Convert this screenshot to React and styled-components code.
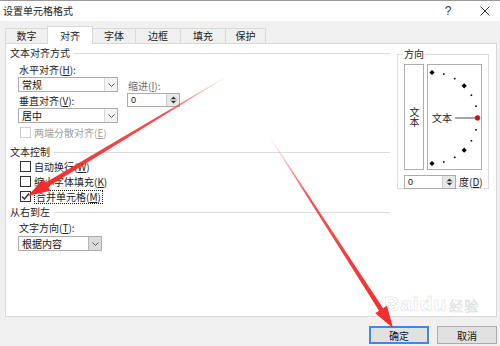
import React from 'react';
import styled, { createGlobalStyle } from 'styled-components';

const Global = createGlobalStyle`
  html, body { margin: 0; padding: 0; }
  body {
    width: 500px; height: 346px; overflow: hidden;
    background: #f0f0f0;
    font-family: "Noto Sans CJK SC", "Microsoft YaHei", "Noto Sans", sans-serif;
    font-size: 10px; color: #1a1a1a;
  }
`;

const Window = styled.div`
  position: relative;
  width: 500px; height: 346px;
  display: flex; flex-direction: column;
  background: #f0f0f0;
  overflow: hidden;
`;

const TitleBar = styled.div`
  box-sizing: border-box;
  height: 21px;
  background: #fff;
  border-top: 1px solid #9a9a9a;
  display: flex; align-items: center;
  padding-left: 3px;
`;
const Title = styled.span`
  flex: 1;
  font-size: 10px; line-height: 14px; color: #222;
`;
const TitleBtn = styled.span`
  width: ${p => p.$w}px;
  margin-right: ${p => p.$mr || 0}px;
  display: flex; align-items: center; justify-content: center;
  font-family: "Liberation Sans", sans-serif;
  font-size: 12px; color: #333;
`;

const TabStrip = styled.div`
  display: flex; align-items: flex-end;
  height: 17px;
  margin-top: 5px;
  padding-left: 5px;
`;
const Tab = styled.div`
  box-sizing: border-box;
  width: ${p => p.$w}px;
  height: ${p => (p.$active ? 18 : 15)}px;
  margin-left: -1px;
  margin-bottom: ${p => (p.$active ? -1 : 0)}px;
  display: flex; align-items: center; justify-content: center;
  border: 1px solid #d9d9d9; border-bottom: none;
  background: ${p => (p.$active ? '#fff' : '#f0f0f0')};
  position: relative; z-index: ${p => (p.$active ? 2 : 0)};
  font-size: 10px; line-height: 12px; color: #222;
  &:first-child { margin-left: 0; }
`;

const Panel = styled.div`
  box-sizing: border-box;
  position: relative; z-index: 1;
  margin-left: 5px;
  width: 492px; height: 274px;
  border: 1px solid #d9d9d9;
  background: #fff;
  display: flex; align-items: flex-start;
  padding: 2px 0 0 4px;
`;

const LeftCol = styled.div`
  width: 380px;
  display: flex; flex-direction: column;
`;

const SectionHeader = styled.div`
  display: flex; align-items: center; gap: 4px;
  height: 14px;
  margin-top: ${p => p.$mt || 0}px;
  font-size: 10px; line-height: 14px; color: #222;
  &::after { content: ''; flex: 1; height: 1px; background: #dcdcdc; }
`;

const Indent = styled.div`
  padding-left: ${p => p.$pl ?? 8}px;
  display: flex;
  flex-direction: ${p => p.$row ? 'row' : 'column'};
  align-items: flex-start;
`;

const Column = styled.div`
  display: flex; flex-direction: column;
  margin-left: ${p => p.$ml || 0}px;
  margin-top: ${p => p.$mt || 0}px;
`;

const Label = styled.div`
  height: 14px; line-height: 14px;
  margin-top: ${p => p.$mt || 0}px;
  padding-left: 1px;
  font-size: 10px; color: ${p => p.$dim ? '#6e6e6e' : '#222'};
  white-space: nowrap;
`;

const SelectBox = styled.div`
  box-sizing: border-box;
  width: ${p => p.$w}px; height: 15px;
  margin-top: ${p => p.$mt || 0}px;
  border: 1px solid #acacac;
  background: #fff;
  display: flex; align-items: stretch;
`;
const SelectText = styled.span`
  flex: 1; padding-left: 3px;
  font-size: 10px; line-height: 13px; color: #111;
`;
const DropBtn = styled.span`
  width: 12px;
  border-left: 1px solid ${p => p.$active ? '#b5b5b5' : '#dadada'};
  background: ${p => p.$active ? '#dcdcdc' : '#f4f4f4'};
  display: flex; align-items: center; justify-content: center;
`;

const SpinBox = styled.div`
  box-sizing: border-box;
  flex: none;
  width: ${p => p.$w}px; height: 14px;
  border: 1px solid #acacac;
  background: #fff;
  display: flex; align-items: stretch;
`;
const SpinText = styled.span`
  flex: 1; padding-left: 3px;
  font-family: "Liberation Sans", sans-serif;
  font-size: 9px; line-height: 12px; color: #111;
`;
const SpinBtns = styled.span`
  width: 12px;
  background: #e8e8e8;
  border-left: 1px solid #d0d0d0;
  display: flex; align-items: center; justify-content: center;
`;

const CheckRow = styled.div`
  display: flex; align-items: center; gap: 3px;
  height: 15px;
  margin-top: ${p => p.$mt || 0}px;
  padding-left: 1px;
  font-size: 10px; color: ${p => p.$disabled ? '#a0a0a0' : '#222'};
  white-space: nowrap;
`;
const Box = styled.span`
  box-sizing: border-box;
  width: 11px; height: 11px;
  border: 1px solid ${p => p.$disabled ? '#cfcfcf' : '#333'};
  background: #fff;
  display: flex; align-items: center; justify-content: center;
`;
const FocusText = styled.span`
  border: 1px dotted #222;
  padding: 0 1px;
  line-height: 12px;
`;

const Group = styled.fieldset`
  box-sizing: border-box;
  margin: 1px 0 0 7px;
  width: 92px; height: 142px;
  padding: 3px 0 2px 6px;
  border: 1px solid #dcdcdc;
  display: flex; flex-direction: column;
  min-inline-size: 0;
`;
const Legend = styled.legend`
  padding: 0 1px;
  margin-left: -1px;
  font-size: 10px; line-height: 14px; color: #222;
`;
const OrientRow = styled.div`
  display: flex; gap: 3px;
`;
const VerticalBox = styled.div`
  box-sizing: border-box;
  width: 20px; height: 106px;
  border: 1px solid #adadad;
  display: flex; align-items: center; justify-content: center;
  writing-mode: vertical-lr; text-orientation: upright;
  font-size: 10px; line-height: 12px; color: #222;
`;
const ArcBox = styled.div`
  box-sizing: border-box;
  width: 55px; height: 106px;
  border: 1px solid #adadad;
  display: flex;
`;
const DegreeRow = styled.div`
  display: flex; align-items: center; gap: 3px;
  margin-top: 4px;
  font-size: 10px; color: #222;
  white-space: nowrap;
`;

const Footer = styled.div`
  display: flex; justify-content: flex-end; gap: 8px;
  margin-top: 9px;
  padding-right: 3px;
`;
const Button = styled.div`
  box-sizing: border-box;
  width: 60px; height: 18px;
  display: flex; align-items: center; justify-content: center;
  background: #e1e1e1;
  border: ${p => p.$primary ? '2px solid #3c8be0' : '1px solid #adadad'};
  font-size: 10px; color: #111;
`;

const Overlay = styled.svg`
  position: absolute; left: 0; top: 0;
  width: 500px; height: 346px;
  pointer-events: none; z-index: 10;
`;

const Watermark = styled.div`
  position: absolute; left: 384px; top: 292px;
  z-index: 9; pointer-events: none;
  color: rgba(255, 255, 255, 0.55);
  -webkit-text-stroke: 0.6px rgba(150, 150, 150, 0.35);
  font-family: "Liberation Sans", sans-serif;
  font-size: 21px; font-weight: bold; line-height: 24px; letter-spacing: 1px;
`;
const WmCn = styled.span`
  font-family: "Noto Sans CJK SC", sans-serif; font-size: 14px; font-weight: normal; margin-left: 2px;
`;

const Chevron = () => (
  <svg width="7" height="4" viewBox="0 0 7 4"><path d="M0.5 0.5 L3.5 3.5 L6.5 0.5" fill="none" stroke="#555" strokeWidth="1" /></svg>
);
const SpinArrows = () => (
  <svg width="7" height="10" viewBox="0 0 7 10">
    <path d="M1 4 L3.5 1.5 L6 4 Z" fill="#333" />
    <line x1="0" y1="5" x2="7" y2="5" stroke="#9a9a9a" strokeWidth="1" />
    <path d="M1 6 L3.5 8.5 L6 6 Z" fill="#333" />
  </svg>
);
const Check = () => (
  <svg width="9" height="9" viewBox="0 0 9 9"><path d="M1 4.5 L3.5 7 L8 1.5" fill="none" stroke="#222" strokeWidth="1.2" /></svg>
);
const CloseX = () => (
  <svg width="10" height="10" viewBox="0 0 10 10"><path d="M0.5 0.5 L9.5 9.5 M9.5 0.5 L0.5 9.5" stroke="#333" strokeWidth="1" /></svg>
);

const Select = ({ w, value, active, mt }) => (
  <SelectBox $w={w} $mt={mt}>
    <SelectText>{value}</SelectText>
    <DropBtn $active={active}><Chevron /></DropBtn>
  </SelectBox>
);
const Spin = ({ w, value }) => (
  <SpinBox $w={w}>
    <SpinText>{value}</SpinText>
    <SpinBtns><SpinArrows /></SpinBtns>
  </SpinBox>
);

const Orientation = () => {
  const cx = 4, cy = 53, r = 45.5;
  const dots = [];
  for (let a = 90; a >= -90; a -= 15) {
    if (a === 0) continue;
    const rad = (a * Math.PI) / 180;
    const x = cx + r * Math.cos(rad), y = cy - r * Math.sin(rad);
    if (a % 45 === 0) {
      dots.push(<path key={a} d={`M${x} ${y - 2.6} L${x + 2.6} ${y} L${x} ${y + 2.6} L${x - 2.6} ${y} Z`} fill="#000" />);
    } else {
      dots.push(<rect key={a} x={x - 0.8} y={y - 0.8} width="1.6" height="1.6" fill="#000" />);
    }
  }
  return (
    <svg width="53" height="104" viewBox="0 0 53 104">
      {dots}
      <text x="4" y="57" fontSize="10" fill="#222" fontFamily="Noto Sans CJK SC, sans-serif">文本</text>
      <line x1="27" y1="53" x2="47" y2="53" stroke="#777" strokeWidth="1.3" />
      <circle cx="49.5" cy="53" r="2.4" fill="#e00" stroke="#700" strokeWidth="0.5" />
    </svg>
  );
};

const Arrow = ({ tail, tip, id, headLen = 22, headW = 7, shaft = 2.4 }) => {
  const dx = tip[0] - tail[0], dy = tip[1] - tail[1];
  const len = Math.hypot(dx, dy);
  const ux = dx / len, uy = dy / len;
  const nx = -uy, ny = ux;
  const bx = tip[0] - ux * headLen, by = tip[1] - uy * headLen;
  const pts = [
    [tail[0] + nx * 0.3, tail[1] + ny * 0.3],
    [bx + nx * shaft, by + ny * shaft],
    [bx + nx * headW, by + ny * headW],
    tip,
    [bx - nx * headW, by - ny * headW],
    [bx - nx * shaft, by - ny * shaft],
    [tail[0] - nx * 0.3, tail[1] - ny * 0.3],
  ];
  return (
    <>
      <defs>
        <linearGradient id={id} gradientUnits="userSpaceOnUse" x1={tail[0]} y1={tail[1]} x2={tip[0]} y2={tip[1]}>
          <stop offset="0" stopColor="#ff3b3b" stopOpacity="0.1" />
          <stop offset="0.3" stopColor="#f43232" stopOpacity="0.85" />
          <stop offset="1" stopColor="#f22a2a" stopOpacity="1" />
        </linearGradient>
      </defs>
      <polygon points={pts.map(p => p.join(',')).join(' ')} fill={`url(#${id})`} />
    </>
  );
};

const tabs = [
  { label: '数字', w: 43 },
  { label: '对齐', w: 46, active: true },
  { label: '字体', w: 44 },
  { label: '边框', w: 46 },
  { label: '填充', w: 46 },
  { label: '保护', w: 41 },
];

export default function App() {
  return (
    <>
      <Global />
      <Window>
        <TitleBar>
          <Title>设置单元格格式</Title>
          <TitleBtn $w={36} $mr={4}>?</TitleBtn>
          <TitleBtn $w={30}><CloseX /></TitleBtn>
        </TitleBar>

        <TabStrip>
          {tabs.map(t => (
            <Tab key={t.label} $w={t.w} $active={t.active}>{t.label}</Tab>
          ))}
        </TabStrip>

        <Panel>
          <LeftCol>
            <SectionHeader>文本对齐方式</SectionHeader>
            <Indent $row>
              <Column>
                <Label $mt={3}>水平对齐(<u>H</u>):</Label>
                <Select w={100} value="常规" />
                <Label $mt={2}>垂直对齐(<u>V</u>):</Label>
                <Select w={100} value="居中" />
              </Column>
              <Column $ml={9} $mt={19}>
                <Label $dim>缩进(<u>I</u>):</Label>
                <Spin w={53} value="0" />
              </Column>
            </Indent>
            <Indent $pl={9}>
              <CheckRow $mt={2} $disabled>
                <Box $disabled />
                <span>两端分散对齐(<u>E</u>)</span>
              </CheckRow>
            </Indent>

            <SectionHeader $mt={5}>文本控制</SectionHeader>
            <Indent $pl={9}>
              <CheckRow><Box /><span>自动换行(<u>W</u>)</span></CheckRow>
              <CheckRow><Box /><span>缩小字体填充(<u>K</u>)</span></CheckRow>
              <CheckRow><Box><Check /></Box><FocusText>合并单元格(<u>M</u>)</FocusText></CheckRow>
            </Indent>

            <SectionHeader $mt={1}>从右到左</SectionHeader>
            <Indent>
              <Label $mt={2}>文字方向(<u>T</u>):</Label>
              <Select w={84} value="根据内容" active mt={1} />
            </Indent>
          </LeftCol>

          <Group>
            <Legend>方向</Legend>
            <OrientRow>
              <VerticalBox>文本</VerticalBox>
              <ArcBox><Orientation /></ArcBox>
            </OrientRow>
            <DegreeRow>
              <Spin w={52} value="0" />
              <span>度(<u>D</u>)</span>
            </DegreeRow>
          </Group>
        </Panel>

        <Footer>
          <Button $primary>确定</Button>
          <Button>取消</Button>
        </Footer>

        <Watermark>Baidu<WmCn>经验</WmCn></Watermark>

        <Overlay viewBox="0 0 500 346">
          <Arrow id="a1" tail={[224, 78]} tip={[28, 196]} />
          <Arrow id="a2" tail={[271, 139]} tip={[393, 328]} />
        </Overlay>
      </Window>
    </>
  );
}
